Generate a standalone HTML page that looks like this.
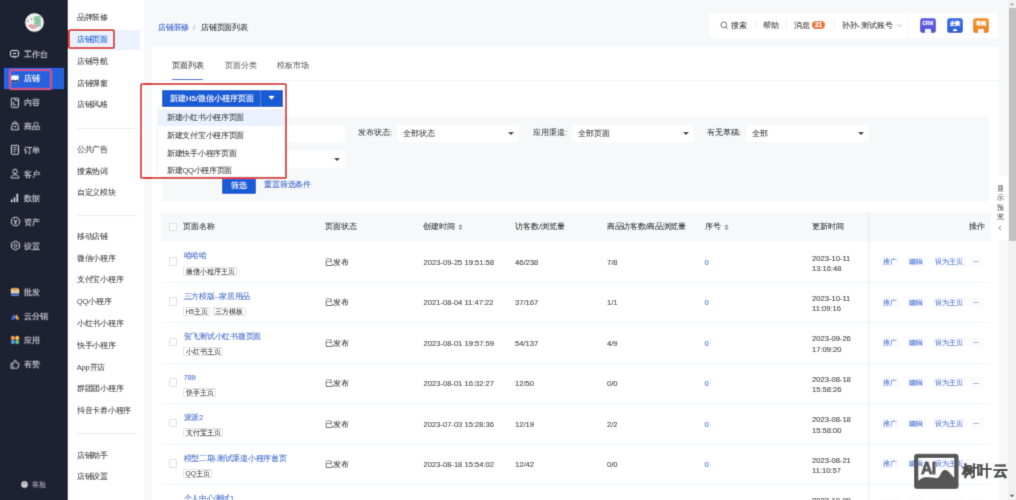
<!DOCTYPE html>
<html><head><meta charset="utf-8">
<style>
*{margin:0;padding:0;box-sizing:border-box}
html,body{width:1016px;height:500px;overflow:hidden}
body{position:relative;background:#f7f8fa;-webkit-text-stroke-width:0.08px;font-family:"Liberation Sans",sans-serif;font-size:7.6px;color:#323233;line-height:1}
#wrap{position:absolute;left:0;top:0;width:1016px;height:500px;filter:url(#cv)}
.a{position:absolute;white-space:nowrap}
#nav{position:absolute;left:0;top:0;width:68px;height:500px;background:#1f2033}
.ni{position:absolute;left:24px;color:#cdced7;font-size:7.8px;line-height:10px}
.nic{position:absolute;left:10px;width:9px;height:9px}
#sub{position:absolute;left:67.8px;top:0;width:76.2px;height:500px;background:#fff}
.si{position:absolute;left:9px;color:#39393b;font-size:7.6px;line-height:10px;letter-spacing:-0.25px}
.sd{position:absolute;left:9px;width:60px;height:1px;background:#ebedf0}
.redbox{position:absolute;border:2.1px solid #dd3a33;border-radius:2.5px}

.hd{font-size:7.8px;line-height:10px;color:#39393b}
.ico{width:15.5px;height:15px;border-radius:3px;overflow:hidden}
.ico span{position:absolute;left:0;top:3px;width:100%;text-align:center;color:#fff;font-size:4.8px;line-height:5px;font-weight:bold}
.ico i{position:absolute;left:5px;bottom:0;width:5.5px;height:3.5px;background:#fff;border-radius:1px 1px 0 0}
.tab{font-size:7.8px;line-height:10px;color:#646566}
.inp{height:16.5px;background:#fff}
.inp span{position:absolute;left:6px;top:3.5px;font-size:7.6px;line-height:10px;color:#39393b}
.car{position:absolute;right:4.8px;top:6.5px;width:0;height:0;border-left:3px solid transparent;border-right:3px solid transparent;border-top:3.5px solid #222}
.lbl{font-size:7.6px;line-height:10px;color:#39393b}
.dd{font-size:7.6px;line-height:10px;color:#39393b;letter-spacing:-0.3px}
.tx{font-size:7.6px;line-height:10px;color:#2c2c2e}
.lk{font-size:7.6px;line-height:10px;color:#3869cc;letter-spacing:-0.25px}
.tag{position:static;display:inline-block;height:9px;border:0.7px solid #e3e4e7;border-radius:1px;font-size:6.6px;line-height:7.8px;padding:0 1.5px;color:#323233;background:#fff;margin-right:2.2px;vertical-align:top}
.cb{width:8.5px;height:8.5px;border:0.7px solid #dcdee0;border-radius:1px;background:#fff}
.op{font-size:6.5px;line-height:10px;color:#4470d4}
.sort{font-size:6px;color:#999}
</style></head><body><svg width="0" height="0" style="position:absolute"><filter id="cv" x="0" y="0" width="1016" height="500" filterUnits="userSpaceOnUse"><feConvolveMatrix order="3" kernelMatrix="1 6 1 6 36 6 1 6 1" divisor="64" edgeMode="duplicate"/></filter></svg><div id="wrap">

<div id="nav">
  <svg class="a" style="left:24.5px;top:12.5px" width="19" height="19" viewBox="0 0 19 19">
    <circle cx="9.5" cy="9.5" r="9.2" fill="#f1f2ee"/>
    <path d="M8.5 3.5 L15.5 2.8 L16.2 13.5 L9.5 14.2Z" fill="#8fcaa9"/>
    <path d="M11 5.5 L14 8 L12 11" stroke="#5fae84" stroke-width="0.8" fill="none"/>
    <path d="M3 12.5 C5 10.5, 10 11, 12.5 13.5 C11.5 16.5, 6 17.5, 3 12.5Z" fill="#e3a0ad"/>
    <circle cx="2.8" cy="8" r="0.7" fill="#555"/><circle cx="6.5" cy="6" r="0.7" fill="#555"/>
  </svg>
  <div class="a" style="left:4px;top:68px;width:60px;height:21.3px;background:#2762dd"></div>

  <svg class="a" style="left:9px;top:48px" width="11" height="12" viewBox="0 0 11 12" fill="none" stroke="#c4c5cf" stroke-width="0.9">
    <rect x="1.5" y="2.5" width="8" height="6" rx="1"/><path d="M4.5 8.5 L5.5 10 L6.5 8.5"/><path d="M4 5.5 H7"/></svg>
  <svg class="a" style="left:11px;top:74.5px" width="8" height="8" viewBox="0 0 8 8">
    <rect x="0.3" y="0.5" width="7.2" height="7" rx="0.5" fill="#fff"/><path d="M0.3 5.5 L2 4.5 L4 5.3 L6 4.4 L7.5 5.3 L7.5 7.5 L0.3 7.5Z" fill="#23408f"/></svg>
  <svg class="a" style="left:10px;top:97px" width="10" height="11" viewBox="0 0 10 11" fill="none" stroke="#c4c5cf" stroke-width="0.9">
    <rect x="1.3" y="1.3" width="7.2" height="9" rx="0.6"/><path d="M3.3 5 V8 H6.5"/><path d="M5 1.3 V3.3 H8.5"/></svg>
  <svg class="a" style="left:10px;top:120px" width="10" height="11" viewBox="0 0 10 11" fill="none" stroke="#c4c5cf" stroke-width="0.9">
    <path d="M1.5 9.8 L2.2 3.8 H7.8 L8.5 9.8Z"/><path d="M3.5 3.8 V3 C3.5 1.4, 6.5 1.4, 6.5 3 V3.8"/><path d="M3.8 6 L5 7 L6.2 6"/></svg>
  <svg class="a" style="left:10px;top:144px" width="10" height="11" viewBox="0 0 10 11" fill="none" stroke="#c4c5cf" stroke-width="0.9">
    <rect x="1.5" y="1.3" width="7" height="9" rx="0.6"/><path d="M3.5 3.8 H6.5 M3.5 5.8 H6.5 M3.5 7.8 H5.5"/></svg>
  <svg class="a" style="left:10px;top:168px" width="10" height="11" viewBox="0 0 10 11" fill="none" stroke="#c4c5cf" stroke-width="0.9">
    <circle cx="5" cy="3.5" r="2.2"/><path d="M1.2 10 C1.5 7.5, 3 6.8, 5 6.8 C7 6.8, 8.5 7.5, 8.8 10Z"/></svg>
  <svg class="a" style="left:10px;top:192px" width="10" height="11" viewBox="0 0 10 11" fill="#c4c5cf">
    <rect x="1" y="7.5" width="1.6" height="2.5"/><rect x="3.7" y="5.5" width="1.6" height="4.5"/><rect x="6.4" y="2" width="1.6" height="8"/></svg>
  <svg class="a" style="left:9.5px;top:216px" width="11" height="11" viewBox="0 0 11 11" fill="none" stroke="#c4c5cf" stroke-width="0.9">
    <circle cx="5.5" cy="5.5" r="4.2"/><path d="M3.8 3.5 L5.5 5.5 L7.2 3.5 M5.5 5.5 V8 M4 6 H7"/></svg>
  <svg class="a" style="left:9.5px;top:240px" width="11" height="11" viewBox="0 0 11 11" fill="none" stroke="#c4c5cf" stroke-width="0.9">
    <path d="M5.5 1 L9.4 3.25 V7.75 L5.5 10 L1.6 7.75 V3.25Z"/><circle cx="5.5" cy="5.5" r="1.6"/></svg>
  <svg class="a" style="left:10px;top:287px" width="10" height="10" viewBox="0 0 10 10">
    <rect x="1" y="1.5" width="8" height="7" rx="0.8" fill="#e9cf94"/><rect x="3" y="1" width="4" height="2.5" fill="#c99e55"/><rect x="1" y="6" width="8" height="2.5" fill="#4a72c9"/></svg>
  <svg class="a" style="left:10px;top:311px" width="10" height="10" viewBox="0 0 10 10">
    <path d="M0.8 8.5 L3.8 3 L5.8 6.5 L4.5 8.5Z" fill="#3a6ee8"/><path d="M5.2 5.5 L6.8 3.8 L9.2 8.5 L6.5 8.5Z" fill="#f0a640"/></svg>
  <svg class="a" style="left:10px;top:335px" width="10" height="10" viewBox="0 0 10 10">
    <circle cx="2.9" cy="2.9" r="2" fill="#f29a5a"/><circle cx="7.1" cy="2.9" r="2" fill="#f5c84a"/><circle cx="2.9" cy="7.1" r="2" fill="#4f9bea"/><circle cx="7.1" cy="7.1" r="2" fill="#5ec27a"/></svg>
  <svg class="a" style="left:10px;top:359px" width="10" height="10" viewBox="0 0 10 10" fill="none" stroke="#c4c5cf" stroke-width="0.9">
    <path d="M1 4.5 H2.8 V9.2 H1Z"/><path d="M2.8 4.5 L5 1 C6 1, 6.3 1.8, 6 3 L5.7 4 H8.3 C9 4, 9.2 4.6, 9 5.2 L8 8.6 C7.8 9, 7.5 9.2, 7 9.2 H2.8"/></svg>
  <svg class="a" style="left:20.5px;top:481px" width="7" height="7" viewBox="0 0 7 7"><circle cx="3.5" cy="3.5" r="3.2" fill="#c9cad0"/><path d="M2 3.2 C2 2, 5 2, 5 3.2" stroke="#777" stroke-width="0.6" fill="none"/></svg>
  <div class="ni" style="top:50.00px">工作台</div>
  <div class="ni" style="top:74.00px;color:#fff">店铺</div>
  <div class="ni" style="top:98.00px">内容</div>
  <div class="ni" style="top:122.00px">商品</div>
  <div class="ni" style="top:146.00px">订单</div>
  <div class="ni" style="top:170.00px">客户</div>
  <div class="ni" style="top:194.00px">数据</div>
  <div class="ni" style="top:218.00px">资产</div>
  <div class="ni" style="top:242.00px">设置</div>
  <div class="ni" style="top:288.00px">批发</div>
  <div class="ni" style="top:312.00px">云分销</div>
  <div class="ni" style="top:336.00px">应用</div>
  <div class="ni" style="top:360.00px">有赞</div>
  <div class="ni" style="top:480.00px;left:32px;font-size:7.4px;color:#9a9bab">客服</div>
  <div class="redbox" style="left:9.2px;top:68.8px;width:43px;height:21.6px;border-color:#c25489"></div>
</div>

<div id="sub">
  <div class="a" style="left:0;top:30px;width:72px;height:20px;background:#ebf1fd"></div>
  <div class="si" style="top:13.30px">品牌装修</div>
  <div class="si" style="top:35.10px;color:#155bd4">店铺页面</div>
  <div class="si" style="top:56.80px">店铺导航</div>
  <div class="si" style="top:78.60px">店铺弹窗</div>
  <div class="si" style="top:100.40px">店铺风格</div>
  <div class="sd" style="top:128px"></div>
  <div class="si" style="top:145.30px">公共广告</div>
  <div class="si" style="top:166.80px">搜索热词</div>
  <div class="si" style="top:188.40px">自定义模块</div>
  <div class="sd" style="top:215px"></div>
  <div class="si" style="top:231.80px">移动店铺</div>
  <div class="si" style="top:253.60px">微信小程序</div>
  <div class="si" style="top:275.40px">支付宝小程序</div>
  <div class="si" style="top:297.20px">QQ小程序</div>
  <div class="si" style="top:319.00px">小红书小程序</div>
  <div class="si" style="top:340.80px">快手小程序</div>
  <div class="si" style="top:362.60px">App开店</div>
  <div class="si" style="top:384.40px">群团团小程序</div>
  <div class="si" style="top:406.20px">抖音卡券小程序</div>
  <div class="sd" style="top:433px"></div>
  <div class="si" style="top:450.80px">店铺助手</div>
  <div class="si" style="top:472.30px">店铺设置</div>
  <div class="redbox" style="left:0.2px;top:28.8px;width:47.5px;height:20px"></div>
</div>


<div id="main">
  <!-- breadcrumb -->
  <div class="a" style="left:158px;top:23.3px;font-size:7.8px;line-height:10px;color:#3466cc;letter-spacing:-0.2px">店铺装修</div>
  <div class="a" style="left:193px;top:23px;font-size:7.8px;line-height:10px;color:#b0b2b8">/</div>
  <div class="a" style="left:201px;top:23.3px;font-size:7.8px;line-height:10px;color:#323233;letter-spacing:-0.2px">店铺页面列表</div>

  <!-- header bar -->
  <div class="a" style="left:709px;top:12.6px;width:199px;height:25.4px;background:#fff"></div>
  <div class="a" style="left:908px;top:12.6px;width:2px;height:25.4px;background:#fbfbfc"></div><div class="a" style="left:910px;top:12.6px;width:88px;height:25.4px;background:#fff"></div>
  <svg class="a" style="left:720px;top:21px" width="9" height="9" viewBox="0 0 9 9"><circle cx="3.8" cy="3.8" r="2.9" fill="none" stroke="#555" stroke-width="0.9"/><line x1="6" y1="6" x2="8.2" y2="8.2" stroke="#555" stroke-width="0.9"/></svg>
  <div class="a hd" style="left:731px;top:20.5px">搜索</div>
  <div class="a" style="left:755px;top:20px;width:0.8px;height:9px;background:#eef0f2"></div>
  <div class="a hd" style="left:763px;top:20.5px">帮助</div>
  <div class="a" style="left:786px;top:20px;width:0.8px;height:9px;background:#eef0f2"></div>
  <div class="a hd" style="left:794px;top:20.5px">消息</div>
  <div class="a" style="left:812px;top:21px;width:13px;height:8px;border-radius:4px;background:#ec7331;color:#fff;font-size:6.5px;line-height:8px;text-align:center;font-weight:bold">21</div>
  <div class="a" style="left:834px;top:20px;width:0.8px;height:9px;background:#eef0f2"></div>
  <div class="a hd" style="left:842px;top:20.5px">孙孙-测试账号</div>
  <svg class="a" style="left:896px;top:23px" width="7" height="5" viewBox="0 0 7 5"><path d="M1 1.2 L3.5 3.6 L6 1.2" fill="none" stroke="#aaa" stroke-width="0.8"/></svg>

  <div class="a ico" style="left:920px;top:17.5px;background:linear-gradient(#6263ea,#5253dc)"><span style="top:3.5px;font-size:4.6px">CRM</span><i style="left:4.5px;width:6.5px;height:4px;background:#f4f4fb"></i></div>
  <div class="a ico" style="left:947px;top:17.5px;background:linear-gradient(#3d78ea,#2d5cd6)"><span style="top:3.5px;font-size:4.6px">企微</span><i style="background:#fff;border-radius:3px 3px 0 0;width:4.5px;height:2.5px;bottom:1.5px;left:5.5px"></i></div>
  <div class="a ico" style="left:973px;top:17.5px;background:linear-gradient(#f59a2a,#ee7f14)"><span style="top:3.5px;font-size:4.6px">导购</span><i style="left:4.5px;width:6.5px;height:4px;background:#fbf3ea"></i></div>

  <!-- main white card -->
  <div class="a" style="left:152px;top:47px;width:847px;height:453px;background:#fff"></div>
  <!-- tabs -->
  <div class="a tab" style="left:172px;top:61px;color:#323233">页面列表</div>
  <div class="a tab" style="left:225px;top:61px">页面分类</div>
  <div class="a tab" style="left:277px;top:61px">模板市场</div>
  <div class="a" style="left:152px;top:80px;width:847px;height:1px;background:#f2f3f5"></div>
  <div class="a" style="left:172px;top:78.5px;width:31px;height:1.5px;background:#155bd4"></div>

  <!-- filter area -->
  <div class="a" style="left:162px;top:115.5px;width:827px;height:86px;background:#f7f8fa"></div>
  <div class="a inp" style="left:222px;top:125px;width:123px"></div>
  <div class="a inp" style="left:222px;top:151px;width:123px"><b class="car" style="left:112px"></b></div>
  <div class="a lbl" style="left:358px;top:128px">发布状态:</div>
  <div class="a inp" style="left:397px;top:125px;width:122px"><span>全部状态</span><b class="car"></b></div>
  <div class="a lbl" style="left:533px;top:128px">应用渠道:</div>
  <div class="a inp" style="left:572px;top:125px;width:122px"><span>全部页面</span><b class="car"></b></div>
  <div class="a lbl" style="left:707px;top:128px">有无草稿:</div>
  <div class="a inp" style="left:746px;top:125px;width:123px"><span>全部</span><b class="car"></b></div>
  <div class="a" style="left:221.5px;top:178px;width:34px;height:15.5px;border-radius:1.5px;background:#155bd4;color:#fff;font-size:7.6px;line-height:15.5px;text-align:center">筛选</div>
  <div class="a" style="left:264px;top:179.5px;font-size:7.6px;line-height:10px;color:#3466cc;letter-spacing:-0.15px">重置筛选条件</div>

  <!-- table -->
  <div class="a" style="left:161px;top:211.5px;width:830px;height:30.5px;background:#f7f8fa"></div>
  <div class="a cb" style="left:168.5px;top:222.5px"></div>
  <div class="a tx" style="left:183px;top:221.5px">页面名称</div>
  <div class="a tx" style="left:325px;top:221.5px">页面状态</div>
  <div class="a tx" style="left:423px;top:221.5px">创建时间</div>
  <div class="a tx" style="left:515px;top:221.5px">访客数/浏览量</div>
  <div class="a tx" style="left:607px;top:221.5px;letter-spacing:-0.3px">商品访客数/商品浏览量</div>
  <div class="a tx" style="left:704.5px;top:221.5px">序号</div>
  <div class="a tx" style="left:812px;top:221.5px">更新时间</div>
  <svg class="a" style="left:457.5px;top:223.5px" width="5" height="6.5" viewBox="0 0 5 6.5"><path d="M0.4 2.8 L2.5 0.3 L4.6 2.8Z M0.4 3.7 L2.5 6.2 L4.6 3.7Z" fill="#8c8c8c"/></svg>
  <svg class="a" style="left:723.5px;top:223.5px" width="5" height="6.5" viewBox="0 0 5 6.5"><path d="M0.4 2.8 L2.5 0.3 L4.6 2.8Z M0.4 3.7 L2.5 6.2 L4.6 3.7Z" fill="#8c8c8c"/></svg>
  <div class="a tx" style="left:968.5px;top:221.5px">操作</div>
  <div class="a" style="left:161px;top:281.95px;width:830px;height:1px;background:#f2f3f5"></div>
  <div class="a cb" style="left:168.5px;top:257.00px"></div>
  <div class="a lk" style="left:183.5px;top:251.30px">哈哈哈</div>
  <div class="a" style="left:183px;top:266.50px"><span class="tag">微信小程序主页</span></div>
  <div class="a tx" style="left:325px;top:257.80px">已发布</div>
  <div class="a tx" style="left:423.5px;top:257.80px">2023-09-25 19:51:58</div>
  <div class="a tx" style="left:515px;top:257.80px">46/238</div>
  <div class="a tx" style="left:607px;top:257.80px">7/8</div>
  <div class="a lk" style="left:704.5px;top:257.80px">0</div>
  <div class="a tx" style="left:812px;top:253.50px">2023-10-11</div>
  <div class="a tx" style="left:812px;top:264.00px">13:16:48</div>
  <div class="a op" style="left:879.5px;top:256.10px;width:20px;height:11px;line-height:11px;text-align:center;background:#fafbff;border-radius:2px;">推广</div>
  <div class="a op" style="left:906px;top:256.10px;width:20px;height:11px;line-height:11px;text-align:center;background:#fafbff;border-radius:2px;">编辑</div>
  <div class="a op" style="left:932.5px;top:256.10px;width:33px;height:11px;line-height:11px;text-align:center;background:#fafbff;border-radius:2px;">设为主页</div>
  <div class="a op" style="left:968.5px;top:256.10px;width:15px;height:11px;line-height:11px;text-align:center;background:#fafbff;border-radius:2px;color:#9a9a9a"><i style="position:absolute;left:4.5px;top:5.3px;width:6px;height:0.8px;background:#b5b7bd"></i></div>
  <div class="a" style="left:161px;top:322.40px;width:830px;height:1px;background:#f2f3f5"></div>
  <div class="a cb" style="left:168.5px;top:297.45px"></div>
  <div class="a lk" style="left:183.5px;top:291.75px">三方模版--家居用品</div>
  <div class="a" style="left:183px;top:306.95px"><span class="tag">H5主页</span><span class="tag">三方模板</span></div>
  <div class="a tx" style="left:325px;top:298.25px">已发布</div>
  <div class="a tx" style="left:423.5px;top:298.25px">2021-08-04 11:47:22</div>
  <div class="a tx" style="left:515px;top:298.25px">37/167</div>
  <div class="a tx" style="left:607px;top:298.25px">1/1</div>
  <div class="a lk" style="left:704.5px;top:298.25px">0</div>
  <div class="a tx" style="left:812px;top:293.95px">2023-10-11</div>
  <div class="a tx" style="left:812px;top:304.45px">11:09:16</div>
  <div class="a op" style="left:879.5px;top:296.55px;width:20px;height:11px;line-height:11px;text-align:center;background:#fafbff;border-radius:2px;">推广</div>
  <div class="a op" style="left:906px;top:296.55px;width:20px;height:11px;line-height:11px;text-align:center;background:#fafbff;border-radius:2px;">编辑</div>
  <div class="a op" style="left:932.5px;top:296.55px;width:33px;height:11px;line-height:11px;text-align:center;background:#fafbff;border-radius:2px;">设为主页</div>
  <div class="a op" style="left:968.5px;top:296.55px;width:15px;height:11px;line-height:11px;text-align:center;background:#fafbff;border-radius:2px;color:#9a9a9a"><i style="position:absolute;left:4.5px;top:5.3px;width:6px;height:0.8px;background:#b5b7bd"></i></div>
  <div class="a" style="left:161px;top:362.85px;width:830px;height:1px;background:#f2f3f5"></div>
  <div class="a cb" style="left:168.5px;top:337.90px"></div>
  <div class="a lk" style="left:183.5px;top:332.20px">贺飞测试小红书微页面</div>
  <div class="a" style="left:183px;top:347.40px"><span class="tag">小红书主页</span></div>
  <div class="a tx" style="left:325px;top:338.70px">已发布</div>
  <div class="a tx" style="left:423.5px;top:338.70px">2023-08-01 19:57:59</div>
  <div class="a tx" style="left:515px;top:338.70px">54/137</div>
  <div class="a tx" style="left:607px;top:338.70px">4/9</div>
  <div class="a lk" style="left:704.5px;top:338.70px">0</div>
  <div class="a tx" style="left:812px;top:334.40px">2023-09-26</div>
  <div class="a tx" style="left:812px;top:344.90px">17:09:20</div>
  <div class="a op" style="left:879.5px;top:337.00px;width:20px;height:11px;line-height:11px;text-align:center;background:#fafbff;border-radius:2px;">推广</div>
  <div class="a op" style="left:906px;top:337.00px;width:20px;height:11px;line-height:11px;text-align:center;background:#fafbff;border-radius:2px;">编辑</div>
  <div class="a op" style="left:932.5px;top:337.00px;width:33px;height:11px;line-height:11px;text-align:center;background:#fafbff;border-radius:2px;">设为主页</div>
  <div class="a op" style="left:968.5px;top:337.00px;width:15px;height:11px;line-height:11px;text-align:center;background:#fafbff;border-radius:2px;color:#9a9a9a"><i style="position:absolute;left:4.5px;top:5.3px;width:6px;height:0.8px;background:#b5b7bd"></i></div>
  <div class="a" style="left:161px;top:403.30px;width:830px;height:1px;background:#f2f3f5"></div>
  <div class="a cb" style="left:168.5px;top:378.35px"></div>
  <div class="a lk" style="left:183.5px;top:372.65px">789</div>
  <div class="a" style="left:183px;top:387.85px"><span class="tag">快手主页</span></div>
  <div class="a tx" style="left:325px;top:379.15px">已发布</div>
  <div class="a tx" style="left:423.5px;top:379.15px">2023-08-01 16:32:27</div>
  <div class="a tx" style="left:515px;top:379.15px">12/50</div>
  <div class="a tx" style="left:607px;top:379.15px">0/0</div>
  <div class="a lk" style="left:704.5px;top:379.15px">0</div>
  <div class="a tx" style="left:812px;top:374.85px">2023-08-18</div>
  <div class="a tx" style="left:812px;top:385.35px">15:58:26</div>
  <div class="a op" style="left:879.5px;top:377.45px;width:20px;height:11px;line-height:11px;text-align:center;background:#fafbff;border-radius:2px;">推广</div>
  <div class="a op" style="left:906px;top:377.45px;width:20px;height:11px;line-height:11px;text-align:center;background:#fafbff;border-radius:2px;">编辑</div>
  <div class="a op" style="left:932.5px;top:377.45px;width:33px;height:11px;line-height:11px;text-align:center;background:#fafbff;border-radius:2px;">设为主页</div>
  <div class="a op" style="left:968.5px;top:377.45px;width:15px;height:11px;line-height:11px;text-align:center;background:#fafbff;border-radius:2px;color:#9a9a9a"><i style="position:absolute;left:4.5px;top:5.3px;width:6px;height:0.8px;background:#b5b7bd"></i></div>
  <div class="a" style="left:161px;top:443.75px;width:830px;height:1px;background:#f2f3f5"></div>
  <div class="a cb" style="left:168.5px;top:418.80px"></div>
  <div class="a lk" style="left:183.5px;top:413.10px">派派2</div>
  <div class="a" style="left:183px;top:428.30px"><span class="tag">支付宝主页</span></div>
  <div class="a tx" style="left:325px;top:419.60px">已发布</div>
  <div class="a tx" style="left:423.5px;top:419.60px">2023-07-03 15:28:36</div>
  <div class="a tx" style="left:515px;top:419.60px">12/19</div>
  <div class="a tx" style="left:607px;top:419.60px">2/2</div>
  <div class="a lk" style="left:704.5px;top:419.60px">0</div>
  <div class="a tx" style="left:812px;top:415.30px">2023-08-18</div>
  <div class="a tx" style="left:812px;top:425.80px">15:58:00</div>
  <div class="a op" style="left:879.5px;top:417.90px;width:20px;height:11px;line-height:11px;text-align:center;background:#fafbff;border-radius:2px;">推广</div>
  <div class="a op" style="left:906px;top:417.90px;width:20px;height:11px;line-height:11px;text-align:center;background:#fafbff;border-radius:2px;">编辑</div>
  <div class="a op" style="left:932.5px;top:417.90px;width:33px;height:11px;line-height:11px;text-align:center;background:#fafbff;border-radius:2px;">设为主页</div>
  <div class="a op" style="left:968.5px;top:417.90px;width:15px;height:11px;line-height:11px;text-align:center;background:#fafbff;border-radius:2px;color:#9a9a9a"><i style="position:absolute;left:4.5px;top:5.3px;width:6px;height:0.8px;background:#b5b7bd"></i></div>
  <div class="a" style="left:161px;top:484.20px;width:830px;height:1px;background:#f2f3f5"></div>
  <div class="a cb" style="left:168.5px;top:459.25px"></div>
  <div class="a lk" style="left:183.5px;top:453.55px">模型二期-测试渠道小程序首页</div>
  <div class="a" style="left:183px;top:468.75px"><span class="tag">QQ主页</span></div>
  <div class="a tx" style="left:325px;top:460.05px">已发布</div>
  <div class="a tx" style="left:423.5px;top:460.05px">2023-08-18 15:54:02</div>
  <div class="a tx" style="left:515px;top:460.05px">12/42</div>
  <div class="a tx" style="left:607px;top:460.05px">0/0</div>
  <div class="a lk" style="left:704.5px;top:460.05px">0</div>
  <div class="a tx" style="left:812px;top:455.75px">2023-08-21</div>
  <div class="a tx" style="left:812px;top:466.25px">11:10:57</div>
  <div class="a op" style="left:879.5px;top:458.35px;width:20px;height:11px;line-height:11px;text-align:center;background:#fafbff;border-radius:2px;">推广</div>
  <div class="a op" style="left:906px;top:458.35px;width:20px;height:11px;line-height:11px;text-align:center;background:#fafbff;border-radius:2px;">编辑</div>
  <div class="a op" style="left:932.5px;top:458.35px;width:33px;height:11px;line-height:11px;text-align:center;background:#fafbff;border-radius:2px;">设为主页</div>
  <div class="a op" style="left:968.5px;top:458.35px;width:15px;height:11px;line-height:11px;text-align:center;background:#fafbff;border-radius:2px;color:#9a9a9a"><i style="position:absolute;left:4.5px;top:5.3px;width:6px;height:0.8px;background:#b5b7bd"></i></div>
  <div class="a" style="left:161px;top:524.65px;width:830px;height:1px;background:#f2f3f5"></div>
  <div class="a cb" style="left:168.5px;top:499.70px"></div>
  <div class="a lk" style="left:183.5px;top:494.00px">个人中心测试1</div>
  <div class="a" style="left:183px;top:509.20px"><span class="tag">微信小程序主页</span></div>
  <div class="a tx" style="left:325px;top:500.50px">已发布</div>
  <div class="a tx" style="left:423.5px;top:500.50px">2023-10-09 10:00:00</div>
  <div class="a tx" style="left:515px;top:500.50px">0/0</div>
  <div class="a tx" style="left:607px;top:500.50px">0/0</div>
  <div class="a lk" style="left:704.5px;top:500.50px">0</div>
  <div class="a tx" style="left:812px;top:496.20px">2023-10-09</div>
  <div class="a tx" style="left:812px;top:506.70px">10:00:00</div>
  <div class="a op" style="left:879.5px;top:498.80px;width:20px;height:11px;line-height:11px;text-align:center;background:#fafbff;border-radius:2px;">推广</div>
  <div class="a op" style="left:906px;top:498.80px;width:20px;height:11px;line-height:11px;text-align:center;background:#fafbff;border-radius:2px;">编辑</div>
  <div class="a op" style="left:932.5px;top:498.80px;width:33px;height:11px;line-height:11px;text-align:center;background:#fafbff;border-radius:2px;">设为主页</div>
  <div class="a op" style="left:968.5px;top:498.80px;width:15px;height:11px;line-height:11px;text-align:center;background:#fafbff;border-radius:2px;color:#9a9a9a"><i style="position:absolute;left:4.5px;top:5.3px;width:6px;height:0.8px;background:#b5b7bd"></i></div>
  <!-- fixed column shadow -->
  <div class="a" style="left:866px;top:211.5px;width:3.5px;height:289px;background:linear-gradient(to right, rgba(0,0,0,0), rgba(0,0,0,0.035))"></div><div class="a" style="left:869.3px;top:211.5px;width:1.2px;height:289px;background:#ebedf0"></div>

  <!-- dropdown (overlay) -->
  <div class="a" style="left:158px;top:108px;width:126px;height:68px;background:#fff;box-shadow:0 1px 4px rgba(0,0,0,0.08)"></div>
  <div class="a" style="left:158px;top:109px;width:126px;height:17px;background:#ebf1fd"></div>
  <div class="a dd" style="left:167px;top:113px">新建小红书小程序页面</div>
  <div class="a dd" style="left:167px;top:131px">新建支付宝小程序页面</div>
  <div class="a dd" style="left:167px;top:148.5px">新建快手小程序页面</div>
  <div class="a dd" style="left:167px;top:166px">新建QQ小程序页面</div>
  <div class="a" style="left:162px;top:89.5px;width:120.5px;height:17px;background:#155bd4"></div>
  <div class="a" style="left:260px;top:89.5px;width:1px;height:17px;background:#4a7fe0"></div>
  <div class="a" style="left:170px;top:93.5px;font-size:7.6px;line-height:10px;color:#fff">新建H5/微信小程序页面</div>
  <svg class="a" style="left:268px;top:96px" width="7" height="4" viewBox="0 0 7 4"><path d="M0.5 0 L6.5 0 L3.5 3.6Z" fill="#fff"/></svg>
  <div class="redbox" style="left:140px;top:83px;width:147px;height:95.5px"></div>
</div>

<!-- right preview tab -->
<div class="a" style="left:993px;top:176px;width:15px;height:64px;background:#fff"></div>
<div class="a" style="left:996.5px;top:184px;width:8px;font-size:6.8px;line-height:9.3px;color:#555;white-space:normal;text-align:center">显示预览</div>
<svg class="a" style="left:997px;top:225px" width="6" height="6" viewBox="0 0 6 6"><path d="M4 0.8 L1.8 3 L4 5.2" fill="none" stroke="#555" stroke-width="0.8"/></svg>

<!-- scrollbar -->
<div class="a" style="left:1008px;top:0;width:8px;height:500px;background:#f1f1f1"></div>
<div class="a" style="left:1008.5px;top:8px;width:7px;height:233px;background:#c1c1c1"></div>
<svg class="a" style="left:1009px;top:2px" width="6" height="4" viewBox="0 0 6 4"><path d="M0.8 3.2 L3 0.8 L5.2 3.2Z" fill="#a3a3a3"/></svg>
<svg class="a" style="left:1009px;top:494px" width="6" height="4" viewBox="0 0 6 4"><path d="M0.8 0.8 L3 3.2 L5.2 0.8Z" fill="#505050"/></svg>

<!-- watermark -->
<svg class="a" style="left:913px;top:453px" width="47" height="38" viewBox="0 0 47 38">
  <path fill-rule="evenodd" fill="#575757" d="M4 0.8 H42.6 Q45.6 0.8 45.6 3.8 V33 Q45.6 36 42.6 36 H4 Q1 36 1 33 V3.8 Q1 0.8 4 0.8Z M5.4 5 V27.7 C8 25, 11 24, 14 24 C18 24, 21 25, 24 25 C27 25, 28 17, 31.5 16.7 C35 16.5, 38 21, 41.1 24.7 V5Z"/>
  <text x="8" y="20.6" font-family="Liberation Sans" font-weight="bold" font-size="17.2" fill="#575757" stroke="#575757" stroke-width="0.9" transform="translate(8 0) scale(0.92 1) translate(-8 0)" letter-spacing="-0.6">AI</text>
</svg>
<div class="a" style="left:962px;top:462.5px;font-size:14.5px;line-height:17px;color:#4e4e4e;font-weight:bold;letter-spacing:0.4px;-webkit-text-stroke:0.5px #4e4e4e">树叶云</div>
</div></body></html>
